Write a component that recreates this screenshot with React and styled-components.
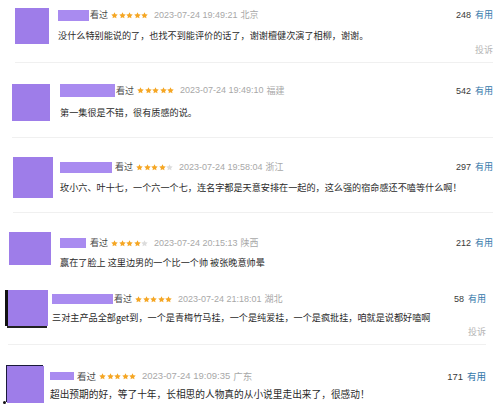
import styled, { createGlobalStyle } from "styled-components";

const GlobalStyle = createGlobalStyle`
  html, body {
    margin: 0;
    padding: 0;
    background: #fff;
  }
`;

const Page = styled.div`
  width: 500px;
  height: 409px;
  overflow: hidden;
  background: #fff;
  font-family: "Noto Sans CJK SC", "Noto Sans", sans-serif;
`;

const Item = styled.article`
  margin: 0 ${(p) => p.$right}px 0 ${(p) => p.$left}px;
  padding: ${(p) => p.$pt}px 0 ${(p) => p.$pb}px;
  border-bottom: 1px solid ${(p) => (p.$line ? "#f0f0f0" : "transparent")};
  display: flex;
  align-items: flex-start;
  font-size: ${(p) => p.$fs}px;
`;

const Avatar = styled.div`
  position: relative;
  flex: none;
  width: ${(p) => p.$w}px;
  height: ${(p) => p.$h}px;
  background: #9e7de9;
  box-shadow: ${(p) => p.$shadow || "none"};

  &::after {
    content: "";
    display: ${(p) => (p.$dot ? "block" : "none")};
    position: absolute;
    left: -4px;
    bottom: -1px;
    width: 3px;
    height: 3px;
    border-radius: 50%;
    background: #111;
  }
`;

const Body = styled.div`
  flex: 1;
  min-width: 0;
  margin-left: ${(p) => p.$gap}px;
  margin-top: ${(p) => p.$mt}px;
`;

const Header = styled.div`
  display: flex;
  align-items: center;
  height: ${(p) => p.$h}px;
  line-height: ${(p) => p.$h}px;
  white-space: nowrap;
`;

const NameBlock = styled.span`
  flex: none;
  width: ${(p) => p.$w}px;
  height: ${(p) => p.$h}px;
  background: #a98bf0;
`;

const Watched = styled.span`
  margin-left: ${(p) => p.$gap}px;
  color: #4a4a4a;
`;

const Stars = styled.span`
  display: inline-flex;
  gap: 0.5px;
  margin-left: 3px;
`;

const Time = styled.span`
  margin-left: 6px;
  font-family: "Liberation Sans", Arial, sans-serif;
  color: #a8a8a8;
`;

const Place = styled.span`
  margin-left: 3px;
  color: #a8a8a8;
`;

const Votes = styled.span`
  margin-left: auto;
  font-family: "Liberation Sans", Arial, sans-serif;
  color: #3a3a3a;
`;

const Useful = styled.span`
  margin-left: 4px;
  font-family: "Noto Sans CJK SC", sans-serif;
  color: #3377aa;
`;

const Comment = styled.p`
  margin: ${(p) => p.$mt}px 0 0;
  font-size: ${(p) => p.$fs}px;
  line-height: 14px;
  color: #2a2a2a;
  white-space: nowrap;
`;

const Report = styled.div`
  margin-top: 2px;
  line-height: 12px;
  text-align: right;
  color: #b5b5b5;
`;

function Star({ on }) {
  return (
    <svg width="7" height="7" viewBox="0 0 10 10">
      <path
        d="M5 0.4l1.4 2.9 3.2.4-2.35 2.2.6 3.2L5 7.5 2.15 9.1l.6-3.2L.4 3.7l3.2-.4z"
        fill={on ? "#f5a623" : "#dcdcdc"}
      />
    </svg>
  );
}

const reviews = [
  {
    left: 15, right: 7, pt: 8, pb: 6, line: true, fs: 9, cfs: 9.15,
    avatar: { w: 34, h: 36 }, gap: 9, mt: 1, hh: 12,
    name: { w: 31, h: 11 }, nameGap: 1, stars: 5,
    time: "2023-07-24 19:49:21", place: "北京", votes: 248,
    text: "没什么特别能说的了，也找不到能评价的话了，谢谢檀健次演了相柳，谢谢。",
    cmt: 7, report: true,
  },
  {
    left: 12, right: 7, pt: 21, pb: 16, line: true, fs: 9, cfs: 9.15,
    avatar: { w: 38, h: 37 }, gap: 10, mt: 0, hh: 13,
    name: { w: 55, h: 13 }, nameGap: 1, stars: 5,
    time: "2023-07-24 19:49:10", place: "福建", votes: 542,
    text: "第一集很是不错，很有质感的说。",
    cmt: 8,
  },
  {
    left: 13, right: 7, pt: 19, pb: 14, line: true, fs: 9, cfs: 9.15,
    avatar: { w: 40, h: 41 }, gap: 7, mt: 4, hh: 12,
    name: { w: 52, h: 11 }, nameGap: 3, stars: 4,
    time: "2023-07-24 19:58:04", place: "浙江", votes: 297,
    text: "玫小六、叶十七，一个六一个七，连名字都是天意安排在一起的，这么强的宿命感还不嗑等什么啊！",
    cmt: 7,
  },
  {
    left: 9, right: 7, pt: 19, pb: 14, line: false, fs: 9, cfs: 9.15,
    avatar: { w: 42, h: 33 }, gap: 9, mt: 5, hh: 12,
    name: { w: 26, h: 10 }, nameGap: 4, stars: 4,
    time: "2023-07-24 20:15:13", place: "陕西", votes: 212,
    text: "赢在了脸上 这里边男的一个比一个帅 被张晚意帅晕",
    cmt: 6,
  },
  {
    left: 8, right: 14, pt: 6, pb: 6, line: true, fs: 9, cfs: 9.15,
    avatar: { w: 40, h: 36, shadow: "-3px 0 0 #111, -1px 2px 0 #222" },
    gap: 4, mt: 3, hh: 12,
    name: { w: 61, h: 10 }, nameGap: 1, stars: 5,
    time: "2023-07-24 21:18:01", place: "湖北", votes: 58,
    text: "三对主产品全部get到，一个是青梅竹马挂，一个是纯爱挂，一个是疯批挂，咱就是说都好嗑啊",
    cmt: 5, report: true,
  },
  {
    left: 7, right: 14, pt: 21, pb: 8, line: false, fs: 9.5, cfs: 9.7,
    avatar: { w: 37, h: 37, shadow: "-1px -1px 0 #1a1a3a", dot: true },
    gap: 6, mt: 4, hh: 12,
    name: { w: 24, h: 8 }, nameGap: 3, stars: 5,
    time: "2023-07-24 19:09:35", place: "广东", votes: 171,
    text: "超出预期的好，等了十年，长相思的人物真的从小说里走出来了，很感动！",
    cmt: 5,
  },
];

export default function App() {
  return (
    <Page>
      <GlobalStyle />
      {reviews.map((r, i) => (
        <Item
          key={i}
          $left={r.left}
          $right={r.right}
          $pt={r.pt}
          $pb={r.pb}
          $line={r.line}
          $fs={r.fs}
        >
          <Avatar
            $w={r.avatar.w}
            $h={r.avatar.h}
            $shadow={r.avatar.shadow}
            $dot={r.avatar.dot}
          />
          <Body $gap={r.gap} $mt={r.mt}>
            <Header $h={r.hh}>
              <NameBlock $w={r.name.w} $h={r.name.h} />
              <Watched $gap={r.nameGap}>看过</Watched>
              <Stars>
                {[0, 1, 2, 3, 4].map((s) => (
                  <Star key={s} on={s < r.stars} />
                ))}
              </Stars>
              <Time>{r.time}</Time>
              <Place>{r.place}</Place>
              <Votes>
                {r.votes}
                <Useful>有用</Useful>
              </Votes>
            </Header>
            <Comment $mt={r.cmt} $fs={r.cfs}>
              {r.text}
            </Comment>
            {r.report && <Report>投诉</Report>}
          </Body>
        </Item>
      ))}
    </Page>
  );
}
